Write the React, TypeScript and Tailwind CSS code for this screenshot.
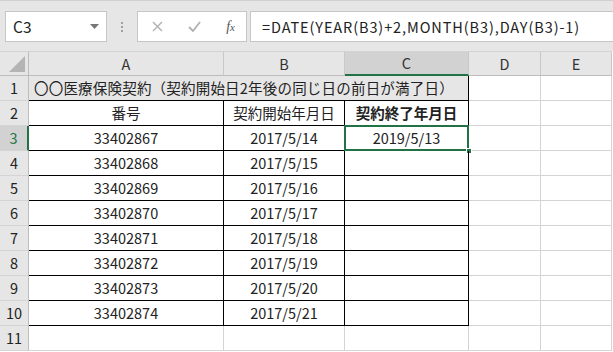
const rows = [
  ["33402867", "2017/5/14"],
  ["33402868", "2017/5/15"],
  ["33402869", "2017/5/16"],
  ["33402870", "2017/5/17"],
  ["33402871", "2017/5/18"],
  ["33402872", "2017/5/19"],
  ["33402873", "2017/5/20"],
  ["33402874", "2017/5/21"],
];

const font = { fontFamily: '"Noto Sans CJK JP", "Noto Sans", sans-serif' };

function RowHead({ n, active }: { n: number; active?: boolean }) {
  return (
    <div
      className={
        "flex items-center justify-center text-[14.5px] border-b border-[#d4d4d4] " +
        (active
          ? "bg-[#d2d2d2] text-[#217346] border-r-2 border-r-[#217346]"
          : "bg-[#e6e6e6] text-[#222] border-r border-r-[#bdbdbd]")
      }
    >
      {n}
    </div>
  );
}

export default function App() {
  return (
    <div className="w-[613px] h-[352px] overflow-hidden bg-white text-[#222]" style={font}>
      {/* Formula bar */}
      <div className="h-[51px] bg-[#e6e6e6] border-t border-[#d0d0d0] flex items-start pt-[10px] pl-[5px] gap-0">
        <div className="w-[102px] h-[31px] bg-white border border-[#c6c6c6] flex items-center justify-between pl-[7px] pr-[7px]">
          <span className="text-[15.5px] text-[#222]">C3</span>
          <svg width="9" height="6" viewBox="0 0 9 6">
            <polygon points="0,0 9,0 4.5,5" fill="#777" />
          </svg>
        </div>
        <div className="w-[30px] h-[31px] flex flex-col items-center justify-center gap-[2px]">
          <div className="w-[2px] h-[2px] bg-[#a0a0a0]" />
          <div className="w-[2px] h-[2px] bg-[#a0a0a0]" />
          <div className="w-[2px] h-[2px] bg-[#a0a0a0]" />
        </div>
        <div className="w-[110px] h-[31px] bg-white border border-[#c6c6c6] flex items-center justify-between pl-[14px] pr-[11px]">
          <svg width="11" height="11" viewBox="0 0 11 11">
            <path d="M1 1 L10 10 M10 1 L1 10" stroke="#b0b0b0" strokeWidth="1.4" />
          </svg>
          <svg width="13" height="11" viewBox="0 0 13 11">
            <path d="M1 6 L5 10 L12 1" stroke="#b0b0b0" strokeWidth="1.8" fill="none" />
          </svg>
          <span className="text-[14px] italic text-[#555]" style={{ fontFamily: '"Liberation Serif", serif' }}>
            f<span className="text-[11px]">x</span>
          </span>
        </div>
        <div className="flex-1 ml-[3px] h-[31px] bg-white border border-[#c6c6c6] border-r-0 flex items-center pl-[11px] text-[14.5px] tracking-[0.9px] text-[#222]">
          =DATE(YEAR(B3)+2,MONTH(B3),DAY(B3)-1)
        </div>
      </div>

      {/* Sheet */}
      <div className="grid grid-cols-[29px_195px_121px_124px_72px_71px] auto-rows-[25px] text-[14.5px]">
        {/* header row */}
        <div className="bg-[#e6e6e6] border-r border-b border-[#bdbdbd] relative border-t border-t-[#d4d4d4]">
          <svg className="absolute right-[3px] bottom-[3px]" width="16" height="16" viewBox="0 0 16 16">
            <polygon points="16,0 16,16 0,16" fill="#b4b4b4" />
          </svg>
        </div>
        {["A", "B"].map((c) => (
          <div key={c} className="bg-[#e6e6e6] border-t border-t-[#d4d4d4] border-r border-r-[#c8c8c8] border-b border-b-[#bdbdbd] flex items-center justify-center text-[#333]">
            {c}
          </div>
        ))}
        <div className="bg-[#d2d2d2] border-t border-t-[#d4d4d4] border-r border-r-[#c8c8c8] border-b-2 border-b-[#217346] flex items-center justify-center text-[#333]">
          C
        </div>
        {["D", "E"].map((c) => (
          <div key={c} className="bg-[#e6e6e6] border-t border-t-[#d4d4d4] border-r border-r-[#c8c8c8] border-b border-b-[#bdbdbd] flex items-center justify-center text-[#333]">
            {c}
          </div>
        ))}

        {/* row 1 */}
        <RowHead n={1} />
        <div className="col-span-3 bg-[#e7e6e6] border-b border-r border-black flex items-center pl-[5px] whitespace-nowrap tracking-[0.2px]">
          〇〇医療保険契約（契約開始日2年後の同じ日の前日が満了日）
        </div>
        <div className="border-r border-b border-[#d4d4d4]" />
        <div className="border-r border-b border-[#d4d4d4]" />

        {/* row 2 */}
        <RowHead n={2} />
        <div className="border-r border-b border-black flex items-center justify-center">番号</div>
        <div className="border-r border-b border-black flex items-center justify-center">契約開始年月日</div>
        <div className="border-r border-b border-black flex items-center justify-center font-bold">契約終了年月日</div>
        <div className="border-r border-b border-[#d4d4d4]" />
        <div className="border-r border-b border-[#d4d4d4]" />

        {rows.map(([id, date], i) => (
          <div key={id} className="contents">
            <RowHead n={i + 3} active={i === 0} />
            <div className="border-r border-b border-black flex items-center justify-center">{id}</div>
            <div className="border-r border-b border-black flex items-center justify-center">{date}</div>
            <div className="border-r border-b border-black flex items-center justify-center relative">
              {i === 0 && (
                <>
                  <span>2019/5/13</span>
                  <div className="absolute -left-[1px] -top-[1px] -right-[1px] -bottom-[1px] border-2 border-[#217346]" />
                  <div className="absolute -right-[4px] -bottom-[4px] w-[6px] h-[6px] bg-[#217346] border border-white" />
                </>
              )}
            </div>
            <div className="border-r border-b border-[#d4d4d4]" />
            <div className="border-r border-b border-[#d4d4d4]" />
          </div>
        ))}

        {/* row 11 */}
        <RowHead n={11} />
        <div className="border-r border-b border-[#d4d4d4]" />
        <div className="border-r border-b border-[#d4d4d4]" />
        <div className="border-r border-b border-[#d4d4d4]" />
        <div className="border-r border-b border-[#d4d4d4]" />
        <div className="border-r border-b border-[#d4d4d4]" />
      </div>
    </div>
  );
}
